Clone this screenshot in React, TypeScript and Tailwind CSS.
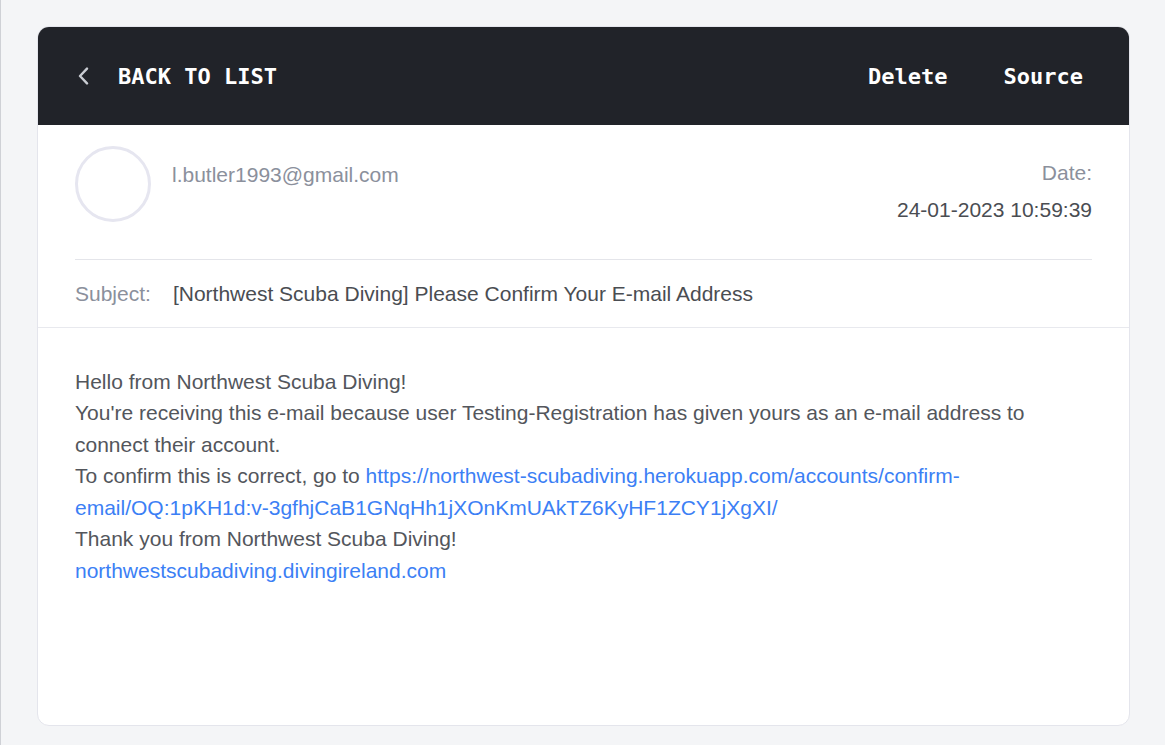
const sans = { fontFamily: '"Liberation Sans", Arial, sans-serif' };

export default function App() {
  return (
    <div
      className="min-h-[745px] border-l border-[#cfd1d6] bg-[#f4f5f7] pl-[36px] pr-[35px] pt-[26px] pb-[20px]"
      style={sans}
    >
      <article className="flex h-[700px] flex-col overflow-hidden rounded-[12px] border border-[#e4e5ec] bg-white">
        <header className="flex h-[98px] shrink-0 items-center justify-between bg-[#212329] pl-[39px] pr-[46px] font-['DejaVu_Sans_Mono',monospace] text-[22px] font-bold text-white">
          <button type="button" className="flex items-center gap-[29px]">
            <svg width="12" height="18" viewBox="0 0 12 18" fill="none">
              <path
                d="M10 1.6 L3 9 L10 16.4"
                stroke="#c9ccd2"
                strokeWidth="2.4"
                strokeLinecap="round"
                strokeLinejoin="round"
              />
            </svg>
            <span>BACK TO LIST</span>
          </button>
          <div className="flex items-center gap-[56px]">
            <button type="button">Delete</button>
            <button type="button">Source</button>
          </div>
        </header>

        <section className="px-[37px] text-[21px] leading-[31.5px]">
          <div className="flex items-start justify-between border-b border-[#e4e5ea] pt-[21px] pb-[34px]">
            <div className="flex items-start gap-[21px]">
              <div className="h-[76px] w-[76px] rounded-full border-[3px] border-[#e6e6f0]" />
              <div className="mt-[13px] text-[#8b909c]">l.butler1993@gmail.com</div>
            </div>
            <div className="mt-[11px] text-right">
              <div className="text-[#8b909c]">Date:</div>
              <div className="mt-[5px] text-[#4a4d52]">24-01-2023 10:59:39</div>
            </div>
          </div>
          <div className="flex gap-[22px] pt-[18px] pb-[17px]">
            <span className="text-[#8b909c]">Subject:</span>
            <span className="text-[#4a4d52]">
              [Northwest Scuba Diving] Please Confirm Your E-mail Address
            </span>
          </div>
        </section>

        <section className="border-t border-[#e8e9ee] px-[37px] pt-[38px] text-[21px] leading-[31.5px] text-[#53565c]">
          Hello from Northwest Scuba Diving!
          <br />
          You're receiving this e-mail because user Testing-Registration has given yours as an e-mail address to connect their account.
          <br />
          To confirm this is correct, go to{' '}
          <a href="#" className="text-[#3c7ff5]">
            https://northwest-scubadiving.herokuapp.com/accounts/confirm-email/OQ:1pKH1d:v-3gfhjCaB1GNqHh1jXOnKmUAkTZ6KyHF1ZCY1jXgXI/
          </a>
          <br />
          Thank you from Northwest Scuba Diving!
          <br />
          <a href="#" className="text-[#3c7ff5]">
            northwestscubadiving.divingireland.com
          </a>
        </section>
      </article>
    </div>
  );
}
